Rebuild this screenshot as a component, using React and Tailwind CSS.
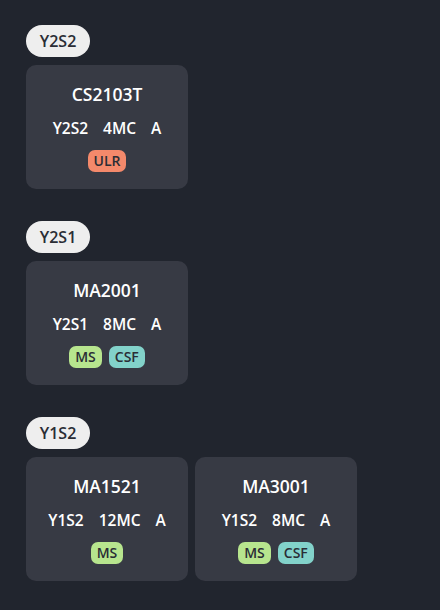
const semesters = [
  {
    name: "Y2S2",
    modules: [{ code: "CS2103T", sem: "Y2S2", mc: "4MC", grade: "A", tags: ["ULR"] }],
  },
  {
    name: "Y2S1",
    modules: [{ code: "MA2001", sem: "Y2S1", mc: "8MC", grade: "A", tags: ["MS", "CSF"] }],
  },
  {
    name: "Y1S2",
    modules: [
      { code: "MA1521", sem: "Y1S2", mc: "12MC", grade: "A", tags: ["MS"] },
      { code: "MA3001", sem: "Y1S2", mc: "8MC", grade: "A", tags: ["MS", "CSF"] },
    ],
  },
]

const tagColors = {
  ULR: "bg-[#f4896b]",
  MS: "bg-[#b7e58e]",
  CSF: "bg-[#82d2ca]",
}

const ModuleCard = ({ mod }) => (
  <div className="w-[162px] h-[124px] rounded-[10px] bg-[#373a44] flex flex-col items-center pt-[17px]">
    <div className="text-[17.5px] font-semibold text-white leading-[24px]">{mod.code}</div>
    <div className="mt-[12px] flex gap-[15px] text-[15.5px] font-semibold text-white leading-[20px]">
      <span>{mod.sem}</span>
      <span>{mod.mc}</span>
      <span>{mod.grade}</span>
    </div>
    <div className="mt-[12px] flex gap-[7px]">
      {mod.tags.map((t) => (
        <span
          key={t}
          className={`${tagColors[t]} h-[22px] px-[6px] rounded-[7px] text-[14px] font-semibold text-[#2a2d35] leading-[22px]`}
        >
          {t}
        </span>
      ))}
    </div>
  </div>
)

export default function App() {
  return (
    <div
      className="min-h-[610px] bg-[#21252e] px-[26px] pt-[25px] flex flex-col gap-[32px]"
      style={{ fontFamily: "'Open Sans', sans-serif" }}
    >
      {semesters.map((s) => (
        <div key={s.name} className="flex flex-col items-start gap-[8px]">
          <div className="h-[32px] w-[64px] rounded-full bg-[#eeeeee] flex items-center justify-center text-[16px] font-semibold text-[#2a2d35]">
            {s.name}
          </div>
          <div className="flex gap-[7px]">
            {s.modules.map((m) => (
              <ModuleCard key={m.code} mod={m} />
            ))}
          </div>
        </div>
      ))}
    </div>
  )
}
